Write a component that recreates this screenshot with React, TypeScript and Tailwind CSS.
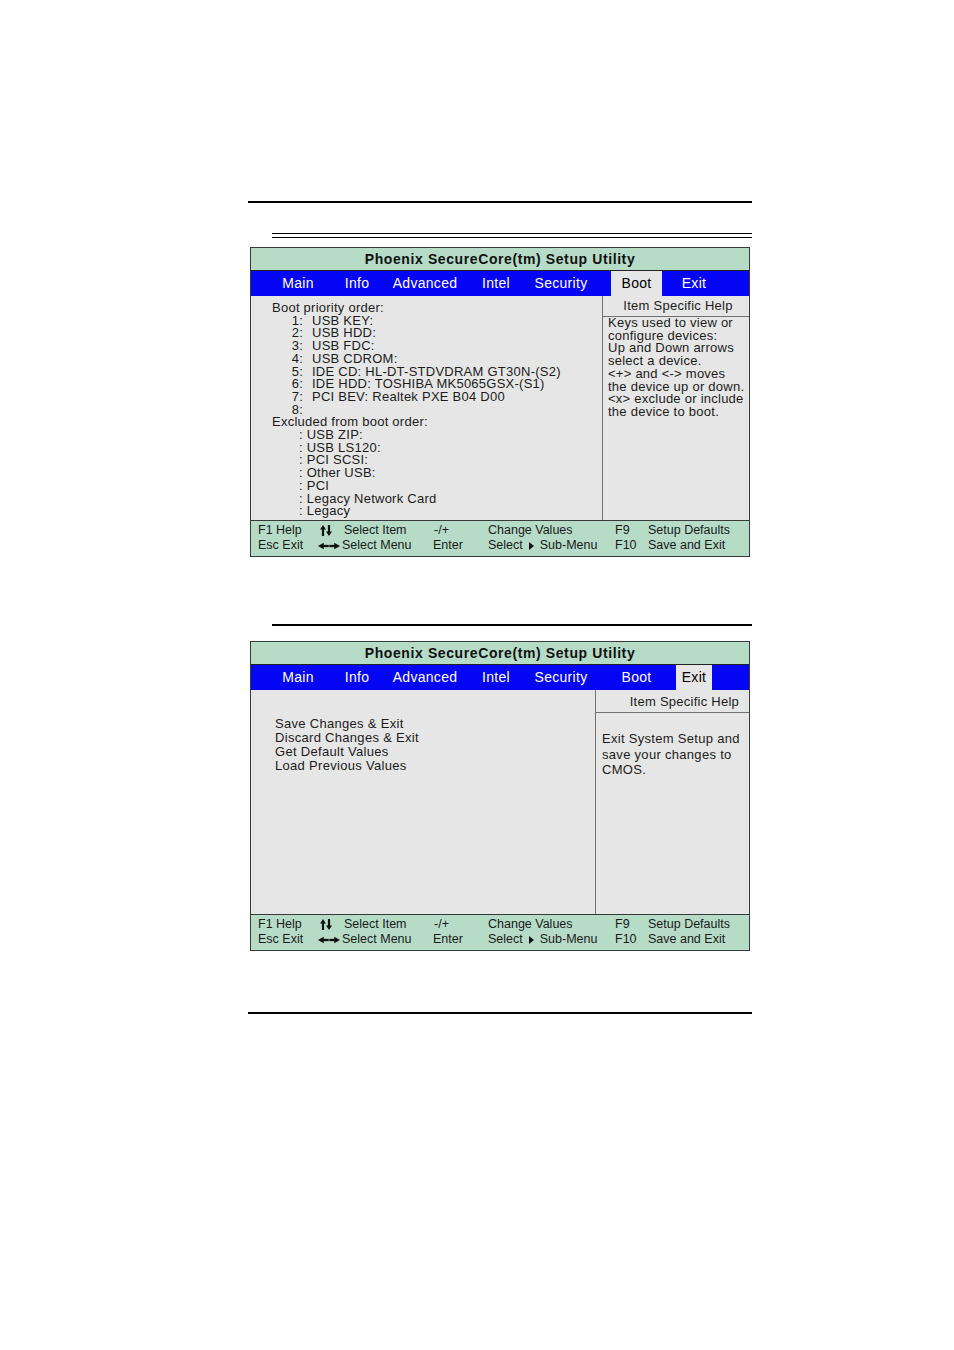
import React from "react";

const tabs = [
  { name: "Main", w: "w-[64px]" },
  { name: "Info", w: "w-[54px]" },
  { name: "Advanced", w: "w-[82px]" },
  { name: "Intel", w: "w-[60px]" },
  { name: "Security", w: "w-[70px]" },
];

const UpDown = () => (
  <svg width="12" height="11" viewBox="0 0 12 11">
    <polygon points="3,0 6,4.5 4.1,4.5 4.1,11 1.9,11 1.9,4.5 0,4.5" fill="#111" />
    <polygon points="9,11 6,6.5 7.9,6.5 7.9,0 10.1,0 10.1,6.5 12,6.5" fill="#111" />
  </svg>
);

const LeftRight = () => (
  <svg width="22" height="8" viewBox="0 0 23 8">
    <polygon points="0,4 6,0.5 6,7.5" fill="#111" />
    <rect x="5" y="2.8" width="6.2" height="2.4" fill="#111" />
    <rect x="11.8" y="2.8" width="6.2" height="2.4" fill="#111" />
    <polygon points="23,4 17,0.5 17,7.5" fill="#111" />
  </svg>
);

const Tri = () => (
  <svg width="5" height="8" viewBox="0 0 5 8" className="mx-[6px]">
    <polygon points="0,0 5,4 0,8" fill="#111" />
  </svg>
);

function MenuBar({ active }: { active: "Boot" | "Exit" }) {
  return (
    <div className="h-[25px] bg-[#0505f5] flex items-stretch text-[14px] tracking-[0.3px] text-white">
      <div className="w-[15px]" />
      {tabs.map((t) => (
        <div key={t.name} className={`${t.w} flex items-center justify-center`}>
          {t.name}
        </div>
      ))}
      <div className="w-[15px]" />
      <div
        className={`w-[51px] flex items-center justify-center ${
          active === "Boot" ? "bg-[#e6e6e6] text-black" : ""
        }`}
      >
        Boot
      </div>
      <div className="w-[14px]" />
      <div
        className={`w-[36px] flex items-center justify-center ${
          active === "Exit" ? "bg-[#e6e6e6] text-black" : ""
        }`}
      >
        Exit
      </div>
    </div>
  );
}

function Footer() {
  return (
    <div className="h-[36px] bg-[#b6dcc7] border-t border-[#3a3a3a] pt-[2px] pl-[7px] grid content-start grid-cols-[60px_24px_91px_55px_127px_33px_1fr] text-[12.5px] leading-[15px] text-[#1a1a1a]">
      <div>F1 Help</div>
      <div className="flex items-center pl-[2px]">
        <UpDown />
      </div>
      <div className="pl-[2px]">Select Item</div>
      <div className="pl-[1px]">-/+</div>
      <div>Change Values</div>
      <div>F9</div>
      <div>Setup Defaults</div>

      <div>Esc Exit</div>
      <div className="flex items-center">
        <LeftRight />
      </div>
      <div>Select Menu</div>
      <div>Enter</div>
      <div className="flex items-center">
        Select
        <Tri />
        Sub-Menu
      </div>
      <div>F10</div>
      <div>Save and Exit</div>
    </div>
  );
}

function Panel({
  active,
  children,
}: {
  active: "Boot" | "Exit";
  children: React.ReactNode;
}) {
  return (
    <div className="ml-[250px] w-[500px] border border-[#3a3a3a] flex flex-col">
      <div className="h-[23px] bg-[#b6dcc7] border-b border-[#222] flex items-center justify-center font-bold text-[14px] tracking-[0.6px] text-[#111]">
        Phoenix SecureCore(tm) Setup Utility
      </div>
      <MenuBar active={active} />
      <div className="h-[224px] bg-[#e6e6e6] flex">{children}</div>
      <Footer />
    </div>
  );
}

const bootList = [
  "USB KEY:",
  "USB HDD:",
  "USB FDC:",
  "USB CDROM:",
  "IDE CD: HL-DT-STDVDRAM GT30N-(S2)",
  "IDE HDD: TOSHIBA MK5065GSX-(S1)",
  "PCI BEV: Realtek PXE B04 D00",
  "",
];

const excluded = [
  "USB ZIP:",
  "USB LS120:",
  "PCI SCSI:",
  "Other USB:",
  "PCI",
  "Legacy Network Card",
  "Legacy",
];

const helpBoot = [
  "Keys used to view or",
  "configure devices:",
  "Up and Down arrows",
  "select a device.",
  "<+> and <-> moves",
  "the device up or down.",
  "<x> exclude or include",
  "the device to boot.",
];

export default function App() {
  return (
    <div className="w-[954px] h-[1350px] bg-white font-['Liberation_Sans',Arial,sans-serif]">
      <div className="pt-[201px] flex flex-col">
        <div className="ml-[248px] w-[504px] h-[2px] bg-black" />
        <div className="ml-[272px] w-[480px] mt-[30px] h-[5px] border-t-[1.5px] border-b-[1.5px] border-black" />

        <div className="mt-[9px]">
          <Panel active="Boot">
            <div className="w-[352px] border-r border-[#707070] pt-[6px] pl-[21px] text-[13px] leading-[12.7px] tracking-[0.25px] text-[#1c1c1c]">
              <div>Boot priority order:</div>
              {bootList.map((t, i) => (
                <div key={i} className="flex">
                  <span className="w-[31px] text-right">{i + 1}:</span>
                  <span className="ml-[9px]">{t}</span>
                </div>
              ))}
              <div>Excluded from boot order:</div>
              {excluded.map((t) => (
                <div key={t} className="pl-[27px]">
                  : {t}
                </div>
              ))}
            </div>
            <div className="flex-1 flex flex-col">
              <div className="h-[21px] border-b border-[#707070] flex items-center justify-center pl-[4px] text-[13px] tracking-[0.25px] text-[#1c1c1c]">
                Item Specific Help
              </div>
              <div className="pl-[5px] text-[13px] leading-[12.7px] tracking-[0.25px] text-[#1c1c1c]">
                {helpBoot.map((t) => (
                  <div key={t}>{t}</div>
                ))}
              </div>
            </div>
          </Panel>
        </div>

        <div className="ml-[272px] w-[480px] mt-[67px] h-[2px] bg-black" />

        <div className="mt-[15px]">
          <Panel active="Exit">
            <div className="w-[345px] border-r border-[#707070] pt-[27px] pl-[24px] text-[13px] leading-[14px] tracking-[0.3px] text-[#1c1c1c]">
              <div>Save Changes &amp; Exit</div>
              <div>Discard Changes &amp; Exit</div>
              <div>Get Default Values</div>
              <div>Load Previous Values</div>
            </div>
            <div className="flex-1 flex flex-col">
              <div className="h-[23px] border-b border-[#707070] pt-[2px] flex items-center justify-end pr-[10px] text-[13px] tracking-[0.25px] text-[#1c1c1c]">
                Item Specific Help
              </div>
              <div className="pt-[18px] pl-[6px] text-[13px] leading-[15.5px] tracking-[0.3px] text-[#1c1c1c]">
                <div>Exit System Setup and</div>
                <div>save your changes to</div>
                <div>CMOS.</div>
              </div>
            </div>
          </Panel>
        </div>

        <div className="ml-[248px] w-[504px] mt-[61px] h-[2px] bg-black" />
      </div>
    </div>
  );
}
